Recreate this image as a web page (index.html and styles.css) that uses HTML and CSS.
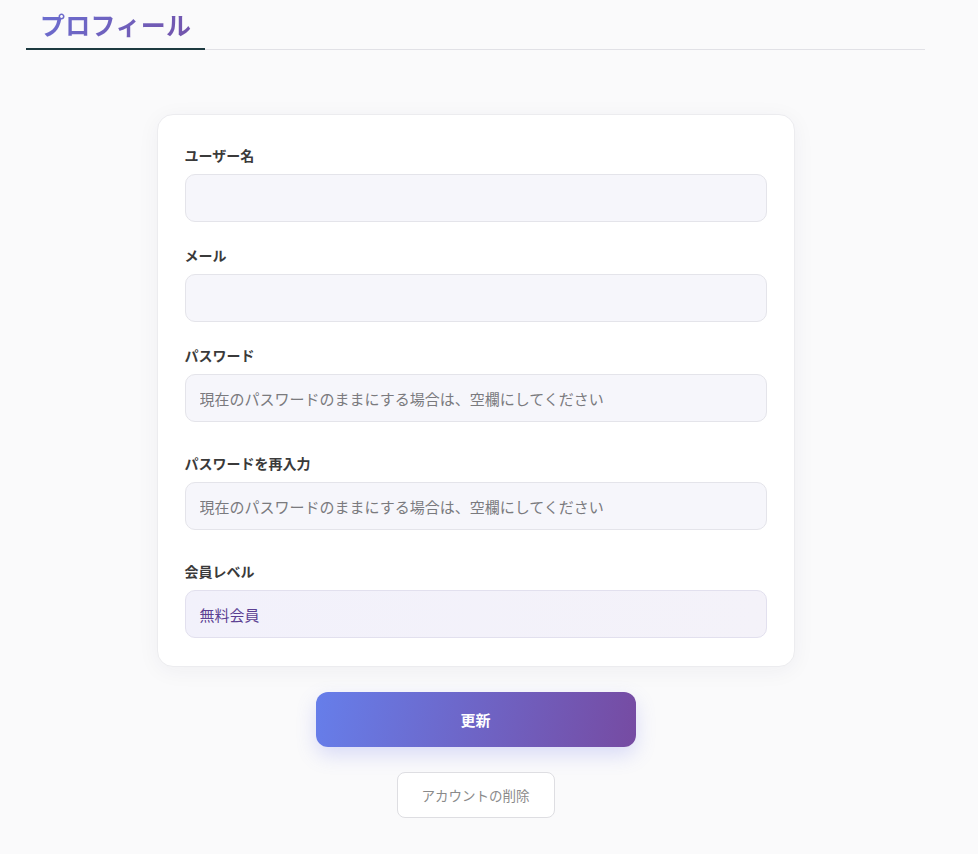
FILE: index.html
```html
<!DOCTYPE html>
<html lang="ja">
<head>
<meta charset="utf-8">
<title>プロフィール</title>
<link rel="stylesheet" href="styles.css">
</head>
<body>
<div class="page">
  <div class="tabs">
    <h1 class="tab-title">プロフィール</h1>
  </div>

  <form class="card">
    <div class="field">
      <label class="field-label">ユーザー名</label>
      <input class="field-input" type="text">
    </div>
    <div class="field">
      <label class="field-label">メール</label>
      <input class="field-input" type="email">
    </div>
    <div class="field field-pw">
      <label class="field-label">パスワード</label>
      <input class="field-input" type="password" placeholder="現在のパスワードのままにする場合は、空欄にしてください">
    </div>
    <div class="field field-pw">
      <label class="field-label">パスワードを再入力</label>
      <input class="field-input" type="password" placeholder="現在のパスワードのままにする場合は、空欄にしてください">
    </div>
    <div class="field field-last">
      <label class="field-label">会員レベル</label>
      <div class="field-input field-level">無料会員</div>
    </div>
  </form>

  <div class="actions">
    <button class="btn-primary" type="button">更新</button>
    <button class="btn-delete" type="button">アカウントの削除</button>
  </div>
</div>
</body>
</html>
```

FILE: styles.css
```css
* { box-sizing: border-box; }

html, body {
  margin: 0;
  padding: 0;
  background: #fafafb;
  font-family: "Noto Sans CJK JP", "Noto Sans", sans-serif;
  color: #333;
}

.page {
  width: 899px;
  margin-left: 26px;
}

.tabs {
  display: flex;
  border-bottom: 1px solid #e1e1e6;
}

.tab-title {
  margin: 0 0 -1px 0;
  padding: 7px 14px 7px 14px;
  font-size: 25px;
  line-height: 34px;
  font-weight: 700;
  letter-spacing: 0.3px;
  border-bottom: 2px solid #1d3a40;
  background: linear-gradient(135deg, #6a72d6 0%, #7450a6 100%);
  -webkit-background-clip: text;
  background-clip: text;
  color: transparent;
  -webkit-text-fill-color: transparent;
}

.card {
  width: 638px;
  margin: 64px auto 0;
  background: #fff;
  border: 1px solid #ececef;
  border-radius: 16px;
  padding: 30px 27px 28px;
  box-shadow: 0 4px 22px rgba(40, 40, 80, 0.05);
}

.field {
  display: flex;
  flex-direction: column;
  margin-bottom: 23px;
}

.field-pw { margin-bottom: 31px; }
.field-last { margin-bottom: 0; }

.field-label {
  font-size: 14px;
  line-height: 20px;
  font-weight: 700;
  color: #3a3a3a;
  margin-bottom: 9px;
}

.field-input {
  height: 48px;
  width: 100%;
  border: 1px solid #e4e4ea;
  border-radius: 10px;
  background: #f6f6fb;
  padding: 0 14px;
  font-family: "Noto Sans CJK JP", "Noto Sans", sans-serif;
  font-size: 15px;
  color: #333;
  outline: none;
}

.field-input::placeholder {
  color: #7a7a7e;
}

.field-level {
  display: flex;
  align-items: center;
  color: #5b3f92;
  background: linear-gradient(90deg, #f2f1fb 0%, #f4f2f9 100%);
  border-color: #e2e0ee;
}

.actions {
  display: flex;
  flex-direction: column;
  align-items: center;
  margin-top: 25px;
}

.btn-primary {
  width: 320px;
  height: 55px;
  border: none;
  border-radius: 12px;
  background: linear-gradient(100deg, #667eea 0%, #764ba2 100%);
  color: #fff;
  font-family: "Noto Sans CJK JP", "Noto Sans", sans-serif;
  font-size: 15px;
  font-weight: 700;
  box-shadow: 0 8px 20px rgba(102, 110, 230, 0.22);
  cursor: pointer;
}

.btn-delete {
  margin-top: 25px;
  width: 158px;
  height: 46px;
  border: 1px solid #dedee2;
  border-radius: 8px;
  background: #fff;
  color: #8a8a8a;
  font-family: "Noto Sans CJK JP", "Noto Sans", sans-serif;
  font-size: 13.5px;
  cursor: pointer;
}
```
